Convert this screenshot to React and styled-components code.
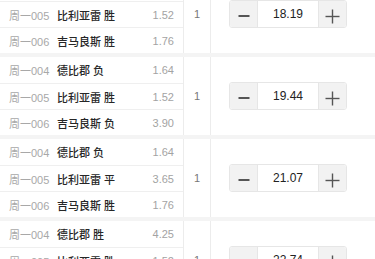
import React from "react";
import styled, { createGlobalStyle } from "styled-components";

const Global = createGlobalStyle`
  html, body { margin: 0; padding: 0; background: #f4f4f4; }
  body { font-family: "Liberation Sans", "Noto Sans CJK SC", sans-serif; overflow: hidden; }
`;

const List = styled.div`
  margin-top: -25px;
  display: flex;
  flex-direction: column;
  gap: 4px;
`;

const Card = styled.div`
  display: flex;
  background: #fff;
`;

const Matches = styled.div`
  width: 183px;
  border-right: 1px solid #ececec;
  display: flex;
  flex-direction: column;
`;

const Row = styled.div`
  box-sizing: border-box;
  height: 26px;
  display: flex;
  align-items: center;
  padding: 0 9px 0 9px;
  font-size: 11px;
  & + & { border-top: 1px solid #efefef; }
`;

const Code = styled.span`
  width: 48px;
  color: #a8a8a8;
`;

const Team = styled.span`
  color: #262626;
  font-weight: 500;
`;

const Odds = styled.span`
  margin-left: auto;
  color: #a3a3a3;
`;

const Multi = styled.div`
  width: 26px;
  border-right: 1px solid #ececec;
  display: flex;
  align-items: center;
  justify-content: center;
  font-size: 11px;
  color: #777;
`;

const StepCell = styled.div`
  flex: 1;
  display: flex;
  align-items: center;
  padding-left: 18px;
`;

const Stepper = styled.div`
  display: flex;
  height: 28px;
  box-sizing: border-box;
  border: 1px solid #e6e6e6;
  border-radius: 3px;
  overflow: hidden;
`;

const StepBtn = styled.div`
  width: ${(p) => p.$w}px;
  background: #f2f2f2;
  display: flex;
  align-items: center;
  justify-content: center;
  padding-top: 4px;
  box-sizing: border-box;
  ${(p) => (p.$side === "left" ? "border-right: 1px solid #e6e6e6;" : "border-left: 1px solid #e6e6e6;")}
`;

const Value = styled.div`
  width: 60px;
  background: #fff;
  display: flex;
  align-items: center;
  justify-content: center;
  font-size: 12px;
  color: #222;
`;

const Minus = () => (
  <svg width="12" height="4" viewBox="0 0 12 4">
    <rect x="0.5" y="1" width="11" height="2" fill="#555" />
  </svg>
);

const Plus = () => (
  <svg width="15" height="15" viewBox="0 0 15 15">
    <rect x="0.5" y="6.8" width="14" height="1.4" fill="#555" />
    <rect x="6.8" y="0.5" width="1.4" height="14" fill="#555" />
  </svg>
);

const cards = [
  {
    rows: [
      ["周一004", "德比郡 胜", "4.25"],
      ["周一005", "比利亚雷 胜", "1.52"],
      ["周一006", "吉马良斯 胜", "1.76"],
    ],
    value: "18.19",
  },
  {
    rows: [
      ["周一004", "德比郡 负", "1.64"],
      ["周一005", "比利亚雷 胜", "1.52"],
      ["周一006", "吉马良斯 负", "3.90"],
    ],
    value: "19.44",
  },
  {
    rows: [
      ["周一004", "德比郡 负", "1.64"],
      ["周一005", "比利亚雷 平", "3.65"],
      ["周一006", "吉马良斯 胜", "1.76"],
    ],
    value: "21.07",
  },
  {
    rows: [
      ["周一004", "德比郡 胜", "4.25"],
      ["周一005", "比利亚雷 胜", "1.52"],
      ["周一006", "吉马良斯 平", "3.20"],
    ],
    value: "22.74",
  },
];

export default function App() {
  return (
    <>
      <Global />
      <List>
        {cards.map((c, i) => (
          <Card key={i}>
            <Matches>
              {c.rows.map((r, j) => (
                <Row key={j}>
                  <Code>{r[0]}</Code>
                  <Team>{r[1]}</Team>
                  <Odds>{r[2]}</Odds>
                </Row>
              ))}
            </Matches>
            <Multi>1</Multi>
            <StepCell>
              <Stepper>
                <StepBtn $w={28} $side="left">
                  <Minus />
                </StepBtn>
                <Value>{c.value}</Value>
                <StepBtn $w={28} $side="right">
                  <Plus />
                </StepBtn>
              </Stepper>
            </StepCell>
          </Card>
        ))}
      </List>
    </>
  );
}
